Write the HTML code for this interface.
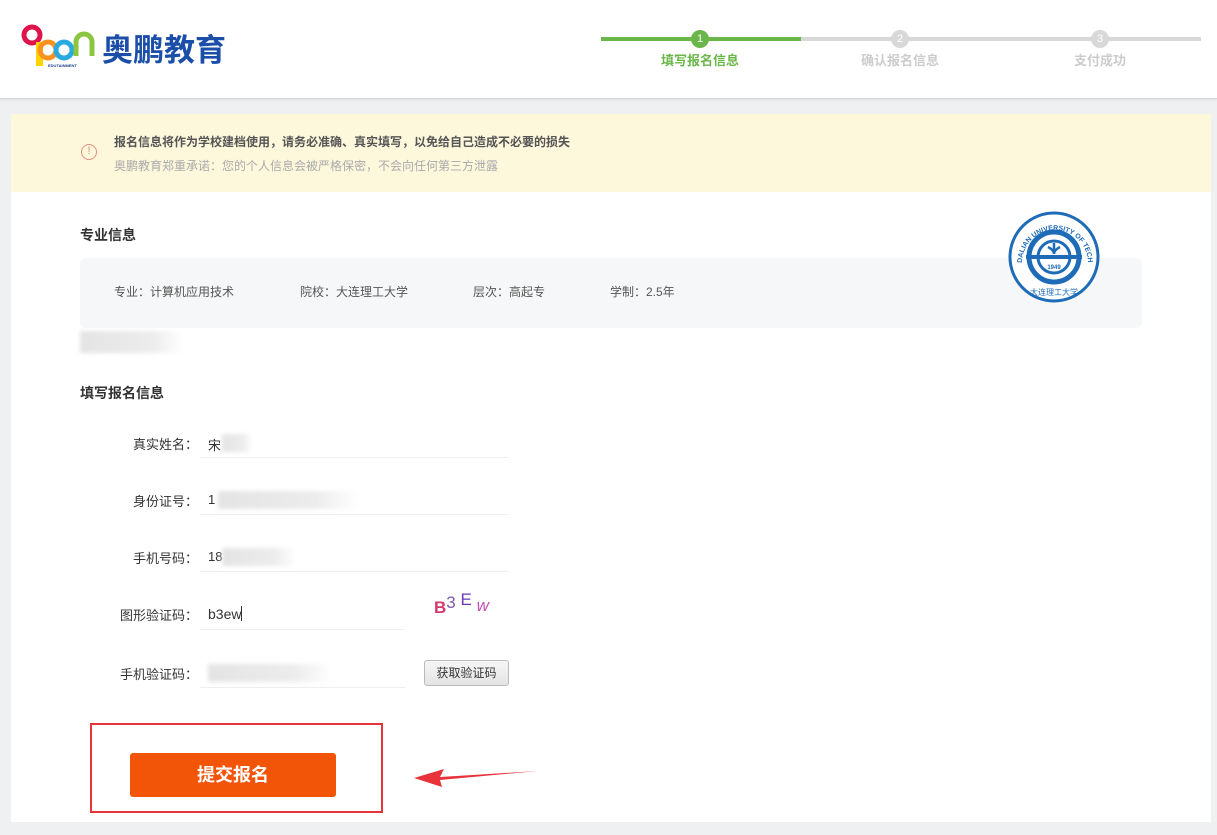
<!DOCTYPE html>
<html><head><meta charset="utf-8"><style>
*{margin:0;padding:0;box-sizing:border-box}
body{width:1217px;height:835px;background:#eef0f2;font-family:"Liberation Sans","Noto Sans CJK SC",sans-serif;position:relative;overflow:hidden;color:#333}
.abs{position:absolute}
.hdr{left:0;top:0;width:1217px;height:99px;background:#fff;border-bottom:1px solid #d8d8d8;box-shadow:0 1px 2px rgba(0,0,0,.08)}
.card{left:11px;top:114px;width:1200px;height:708px;background:#fff}
.warn{left:11px;top:114px;width:1200px;height:78px;background:#fdf7dc}
.lbl{font-size:13px;color:#333;text-align:right;width:130px;left:68px;font-family:"Noto Sans CJK SC",sans-serif;line-height:18px}
.line{height:1px;background:#eee}
.blur{background:linear-gradient(90deg,#e4e4e4,#ececec 70%,#fff);filter:blur(2px)}
</style></head><body>
<div class="abs hdr"></div>
<svg class="abs" style="left:20px;top:20px" width="80" height="50" viewBox="0 0 80 50">
<circle cx="12" cy="15" r="8" fill="none" stroke="#e0144c" stroke-width="5"/>
<rect x="16" y="22" width="7" height="24" fill="#ffd400"/>
<circle cx="28" cy="30" r="8" fill="none" stroke="#f7931e" stroke-width="5"/>
<circle cx="44" cy="30" r="8" fill="none" stroke="#29abe2" stroke-width="5"/>
<path d="M56 36 V22 a8 8 0 0 1 16 0 V36" fill="none" stroke="#8cc63f" stroke-width="5"/>
<text x="28" y="47" font-size="4" font-weight="bold" fill="#1b3d91">EDUTAINMENT</text>
</svg>
<div class="abs" style="left:102px;top:32px;font-size:31px;font-weight:bold;color:#1a4ea8;line-height:38px">奥鹏教育</div>
<div class="abs" style="left:601px;top:37px;width:200px;height:4px;background:#6ab64a"></div>
<div class="abs" style="left:801px;top:37px;width:400px;height:4px;background:#d8d8d8"></div>
<div class="abs" style="left:691px;top:30px;width:18px;height:18px;border-radius:50%;background:#6ab64a;color:#fff;font-size:11px;text-align:center;line-height:18px">1</div>
<div class="abs" style="left:891px;top:30px;width:18px;height:18px;border-radius:50%;background:#d8d8d8;color:#fff;font-size:11px;text-align:center;line-height:18px">2</div>
<div class="abs" style="left:1091px;top:30px;width:18px;height:18px;border-radius:50%;background:#d8d8d8;color:#fff;font-size:11px;text-align:center;line-height:18px">3</div>
<div class="abs" style="left:640px;top:50px;width:120px;text-align:center;font-size:13px;font-weight:bold;color:#6ab64a">填写报名信息</div>
<div class="abs" style="left:840px;top:50px;width:120px;text-align:center;font-size:13px;font-weight:bold;color:#ccc">确认报名信息</div>
<div class="abs" style="left:1040px;top:50px;width:120px;text-align:center;font-size:13px;font-weight:bold;color:#ccc">支付成功</div>

<div class="abs card"></div>
<div class="abs warn"></div>
<div class="abs" style="left:81px;top:144px;width:16px;height:16px;border:1.5px solid #e8907a;border-radius:50%;color:#e8907a;font-size:11px;text-align:center;line-height:13px">!</div>
<div class="abs" style="left:114px;top:133px;font-size:12px;font-weight:bold;color:#555">报名信息将作为学校建档使用，请务必准确、真实填写，以免给自己造成不必要的损失</div>
<div class="abs" style="left:114px;top:157px;font-size:12px;color:#aaa">奥鹏教育郑重承诺：您的个人信息会被严格保密，不会向任何第三方泄露</div>

<div class="abs" style="left:80px;top:225px;font-size:14px;font-weight:bold;color:#333">专业信息</div>
<div class="abs" style="left:80px;top:258px;width:1062px;height:70px;background:#f6f7f8;border-radius:6px"></div>
<div class="abs" style="left:114px;top:283px;font-size:12px;color:#555">专业：计算机应用技术</div>
<div class="abs" style="left:300px;top:283px;font-size:12px;color:#555">院校：大连理工大学</div>
<div class="abs" style="left:473px;top:283px;font-size:12px;color:#555">层次：高起专</div>
<div class="abs" style="left:610px;top:283px;font-size:12px;color:#555">学制：2.5年</div>
<svg class="abs" style="left:1008px;top:211px" width="92" height="92" viewBox="0 0 92 92">
<defs><path id="arc" d="M14 52 A32 32 0 1 1 80 52"/></defs>
<circle cx="46" cy="46" r="44" fill="#fff" stroke="#1e6bb8" stroke-width="3"/>
<text font-size="7" font-weight="bold" fill="#1e6bb8"><textPath href="#arc">DALIAN UNIVERSITY OF TECHNOLOGY</textPath></text>
<circle cx="46" cy="46" r="25" fill="none" stroke="#1e6bb8" stroke-width="5"/>
<circle cx="46" cy="46" r="16" fill="none" stroke="#1e6bb8" stroke-width="3"/>
<rect x="18" y="44" width="56" height="4" fill="#1e6bb8"/>
<path d="M46 32 v11 M40 36 q6 3 6 7 q0-4 6-7" stroke="#1e6bb8" stroke-width="2.5" fill="none"/>
<text x="46" y="58" font-size="6" font-weight="bold" fill="#1e6bb8" text-anchor="middle">1949</text>
<text x="46" y="84" font-size="8" fill="#1e6bb8" text-anchor="middle" font-family="Noto Sans CJK SC">大连理工大学</text>
</svg>
<div class="abs blur" style="left:80px;top:331px;width:103px;height:22px"></div>

<div class="abs" style="left:80px;top:383px;font-size:14px;font-weight:bold;color:#333">填写报名信息</div>

<div class="abs lbl" style="top:435px">真实姓名：</div>
<div class="abs" style="left:208px;top:435px;font-size:13px">宋</div>
<div class="abs blur" style="left:222px;top:434px;width:30px;height:18px"></div>
<div class="abs line" style="left:200px;top:457px;width:308px"></div>

<div class="abs lbl" style="top:492px">身份证号：</div>
<div class="abs" style="left:208px;top:492px;font-size:13px">1</div>
<div class="abs blur" style="left:218px;top:491px;width:140px;height:18px"></div>
<div class="abs line" style="left:200px;top:514px;width:308px"></div>

<div class="abs lbl" style="top:549px">手机号码：</div>
<div class="abs" style="left:208px;top:549px;font-size:13px">18</div>
<div class="abs blur" style="left:222px;top:548px;width:74px;height:18px"></div>
<div class="abs line" style="left:200px;top:571px;width:308px"></div>

<div class="abs lbl" style="top:606px">图形验证码：</div>
<div class="abs" style="left:208px;top:606px;font-size:14px">b3ew<span style="display:inline-block;width:1px;height:15px;background:#333;vertical-align:-2px"></span></div>
<div class="abs line" style="left:200px;top:629px;width:205px"></div>
<div class="abs" style="left:434px;top:592px;font-size:17px;white-space:nowrap">
<span style="color:#d23a6a;font-weight:bold;position:relative;top:6px">B</span><span style="color:#7a5aa8;position:relative;top:1px">3</span> <span style="color:#6a3ab8;position:relative;top:-2px">E</span> <span style="color:#c050b0;font-style:italic;position:relative;top:4px">w</span></div>

<div class="abs lbl" style="top:665px">手机验证码：</div>
<div class="abs blur" style="left:208px;top:664px;width:124px;height:18px"></div>
<div class="abs line" style="left:200px;top:687px;width:205px"></div>
<div class="abs" style="left:424px;top:660px;width:85px;height:26px;border:1px solid #bbb;border-radius:3px;background:linear-gradient(#f6f6f6,#e4e4e4);font-size:12px;color:#333;text-align:center;line-height:24px">获取验证码</div>

<div class="abs" style="left:90px;top:723px;width:293px;height:90px;border:2px solid #e8333a"></div>
<div class="abs" style="left:130px;top:753px;width:206px;height:44px;background:#f25408;border-radius:3px;color:#fff;font-size:18px;font-weight:bold;text-align:center;line-height:44px">提交报名</div>
<svg class="abs" style="left:410px;top:765px" width="135" height="25" viewBox="0 0 135 25">
<path d="M128 6 L30 12 L34 4 L4 13 L32 22 L30 15 Z" fill="#e8333a"/>
</svg>
</body></html>
